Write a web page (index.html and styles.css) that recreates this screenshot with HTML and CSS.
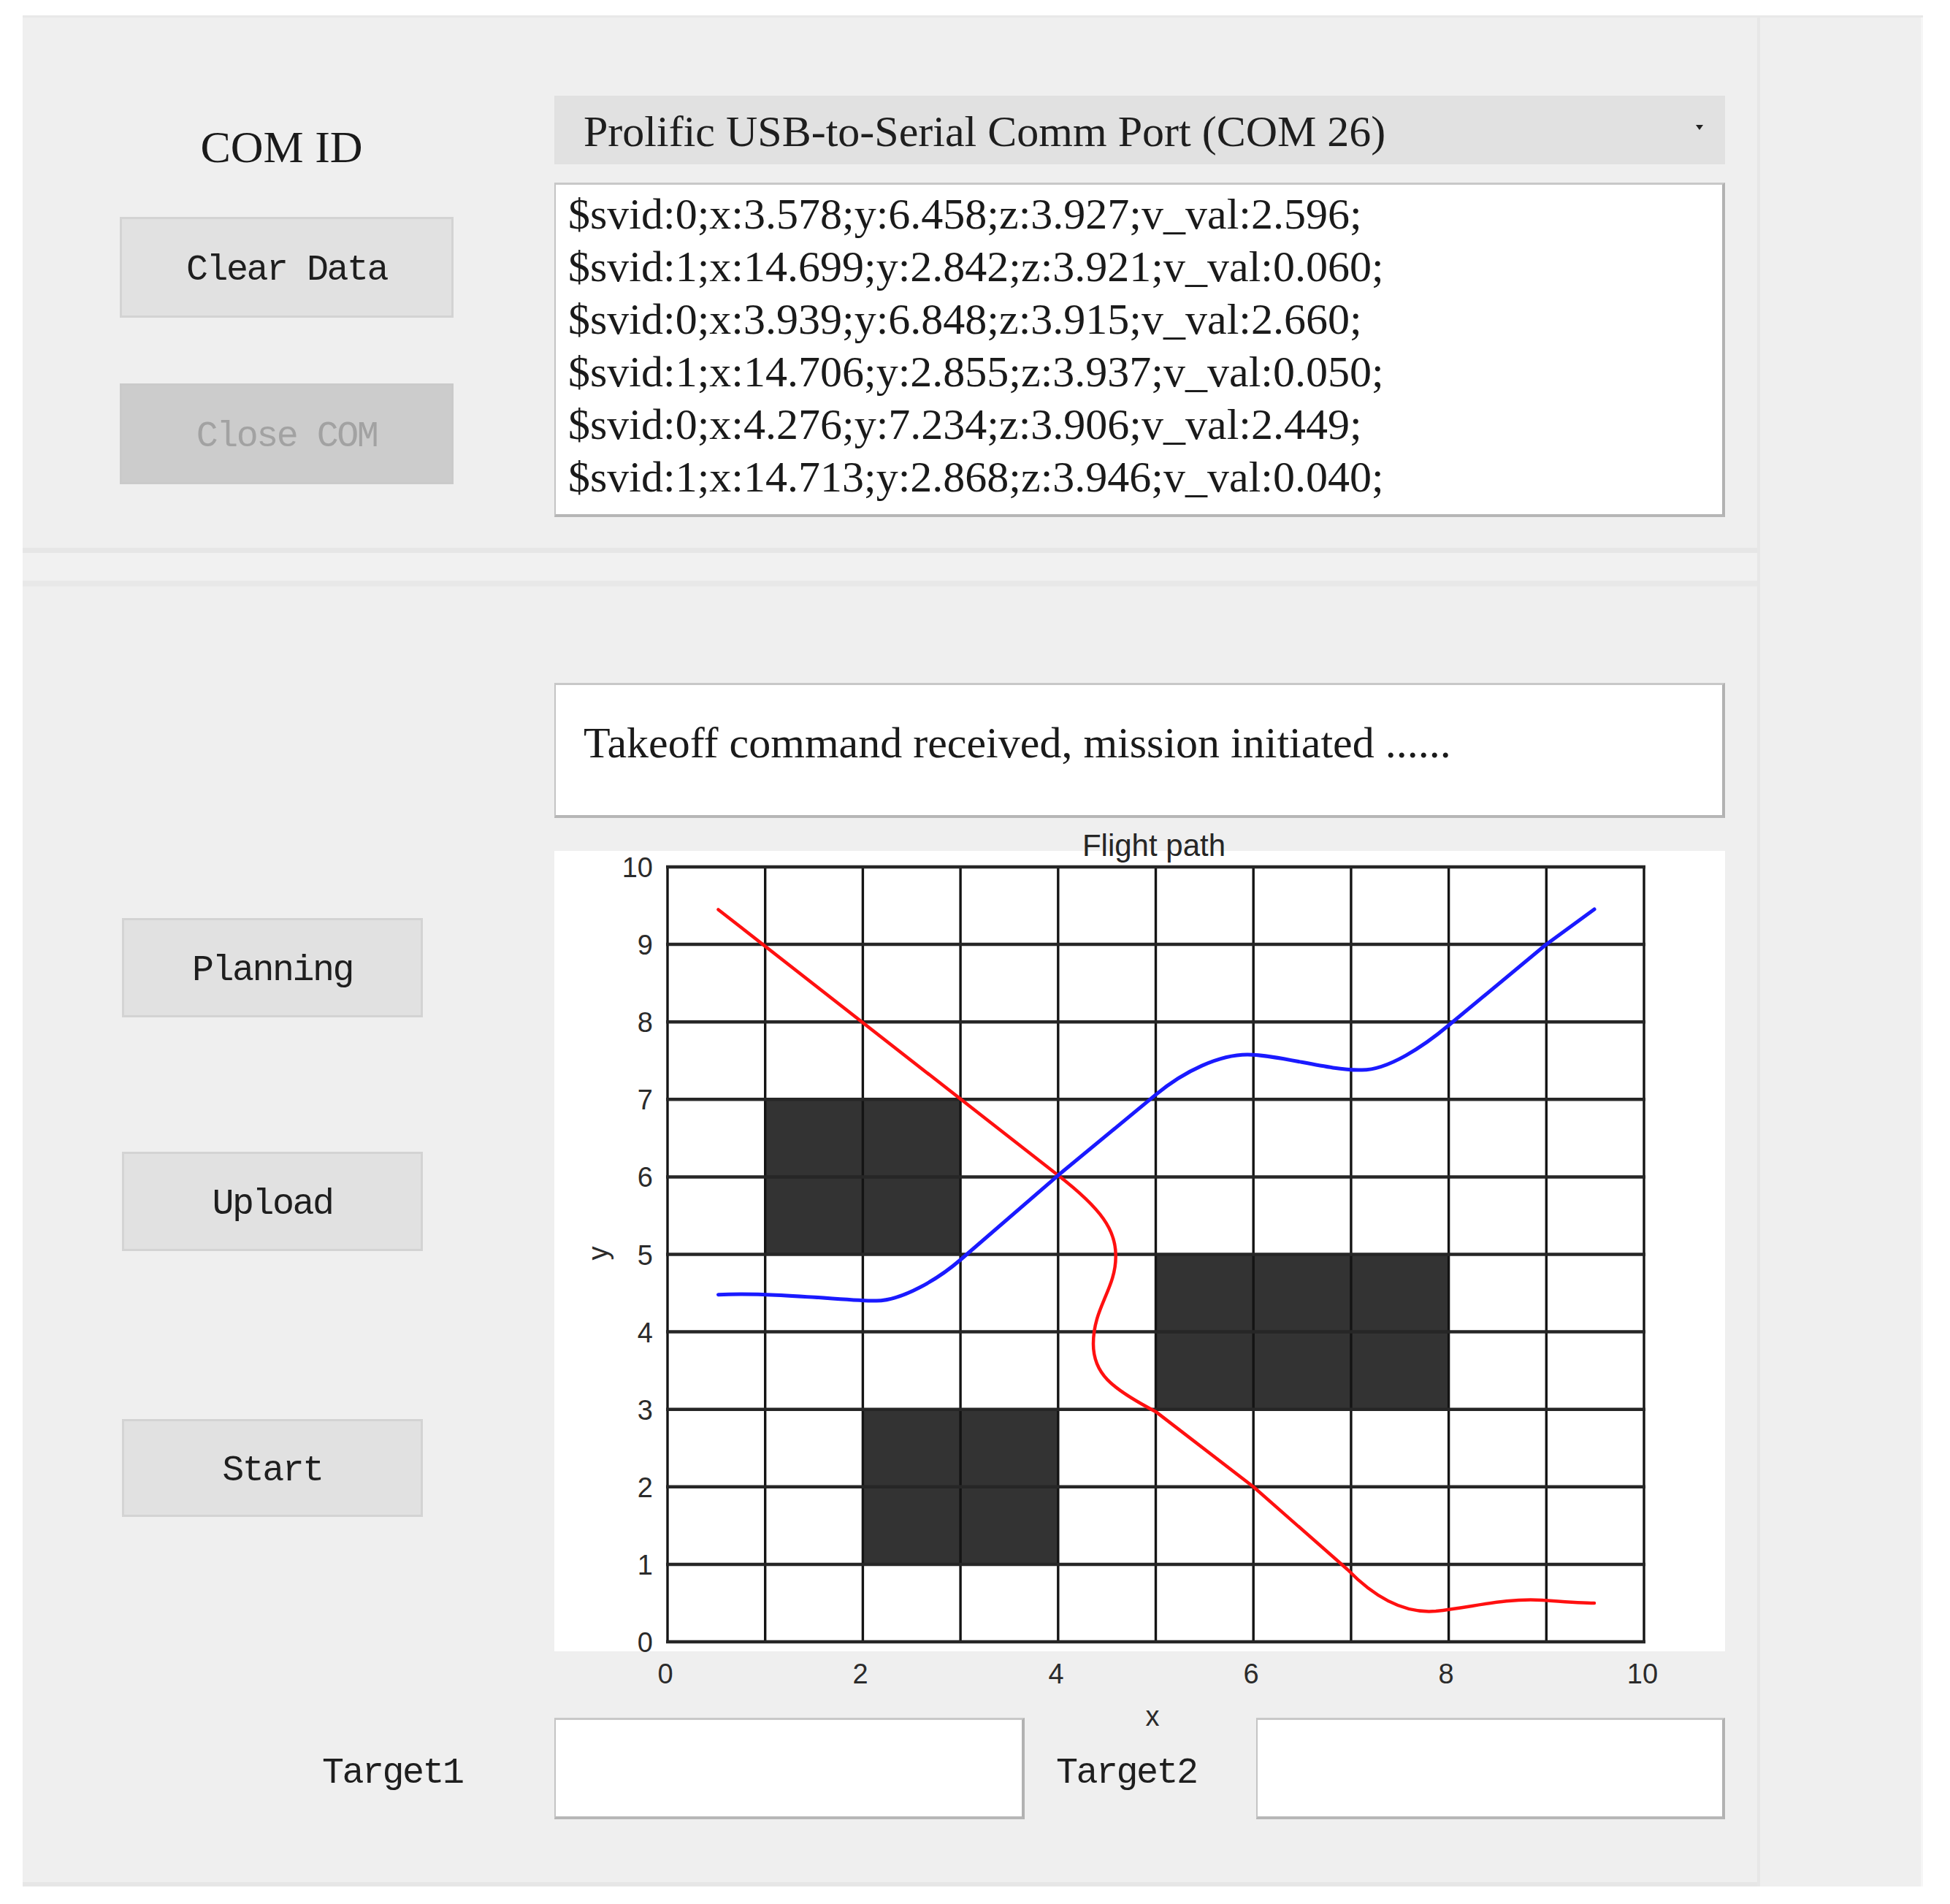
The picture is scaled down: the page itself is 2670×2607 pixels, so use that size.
FILE: index.html
```html
<!DOCTYPE html>
<html lang="en">
<head>
<meta charset="utf-8">
<title>COM Flight Planner</title>
<link rel="stylesheet" href="styles.css">
</head>
<body>
<div class="frame">
  <div class="main">
    <section class="top-panel">
      <div class="left-col">
        <div class="com-label">COM ID</div>
        <div class="btn btn-clear">Clear Data</div>
        <div class="btn btn-disabled btn-close">Close COM</div>
      </div>
      <div class="right-col">
        <div class="dropdown">
          <span class="dropdown-text">Prolific USB-to-Serial Comm Port (COM 26)</span>
          <span class="dropdown-arrow"></span>
        </div>
        <div class="log">
          <div>$svid:0;x:3.578;y:6.458;z:3.927;v_val:2.596;</div>
          <div>$svid:1;x:14.699;y:2.842;z:3.921;v_val:0.060;</div>
          <div>$svid:0;x:3.939;y:6.848;z:3.915;v_val:2.660;</div>
          <div>$svid:1;x:14.706;y:2.855;z:3.937;v_val:0.050;</div>
          <div>$svid:0;x:4.276;y:7.234;z:3.906;v_val:2.449;</div>
          <div>$svid:1;x:14.713;y:2.868;z:3.946;v_val:0.040;</div>
        </div>
      </div>
    </section>
    <div class="panel-gap"></div>
    <section class="bottom-panel">
      <div class="bottom-row">
        <div class="btn-col">
          <div class="btn btn-plan">Planning</div>
          <div class="btn btn-upload">Upload</div>
          <div class="btn btn-start">Start</div>
        </div>
        <div class="plot-col">
          <div class="message">Takeoff command received, mission initiated ......</div>
          <svg class="plot" width="1603" height="1190" viewBox="759 1140 1603 1190" xmlns="http://www.w3.org/2000/svg">
            <rect x="759" y="1165" width="1603" height="1096" fill="#ffffff"/>
            <!-- obstacles -->
            <rect x="1047.7" y="1505.3" width="267.4" height="212.2" fill="#333333"/>
            <rect x="1582.5" y="1717.5" width="401.1" height="212.2" fill="#333333"/>
            <rect x="1181.4" y="1929.7" width="267.4" height="212.2" fill="#333333"/>
            <!-- vertical grid -->
            <g stroke="#141414" stroke-width="3.4">
              <line x1="914" y1="1187" x2="914" y2="2248"/>
              <line x1="1047.7" y1="1187" x2="1047.7" y2="2248"/>
              <line x1="1181.4" y1="1187" x2="1181.4" y2="2248"/>
              <line x1="1315.1" y1="1187" x2="1315.1" y2="2248"/>
              <line x1="1448.8" y1="1187" x2="1448.8" y2="2248"/>
              <line x1="1582.5" y1="1187" x2="1582.5" y2="2248"/>
              <line x1="1716.2" y1="1187" x2="1716.2" y2="2248"/>
              <line x1="1849.9" y1="1187" x2="1849.9" y2="2248"/>
              <line x1="1983.6" y1="1187" x2="1983.6" y2="2248"/>
              <line x1="2117.3" y1="1187" x2="2117.3" y2="2248"/>
              <line x1="2251" y1="1187" x2="2251" y2="2248"/>
            </g>
            <!-- horizontal grid -->
            <g stroke="#262626" stroke-width="4.5">
              <line x1="912" y1="1187" x2="2253" y2="1187"/>
              <line x1="912" y1="1293.1" x2="2253" y2="1293.1"/>
              <line x1="912" y1="1399.2" x2="2253" y2="1399.2"/>
              <line x1="912" y1="1505.3" x2="2253" y2="1505.3"/>
              <line x1="912" y1="1611.4" x2="2253" y2="1611.4"/>
              <line x1="912" y1="1717.5" x2="2253" y2="1717.5"/>
              <line x1="912" y1="1823.6" x2="2253" y2="1823.6"/>
              <line x1="912" y1="1929.7" x2="2253" y2="1929.7"/>
              <line x1="912" y1="2035.8" x2="2253" y2="2035.8"/>
              <line x1="912" y1="2141.9" x2="2253" y2="2141.9"/>
              <line x1="912" y1="2248" x2="2253" y2="2248"/>
            </g>
            <!-- paths -->
            <path d="M983.5 1245.4 L1448.8 1609.3 C1509 1656 1528 1685 1527.7 1719.6 C1528 1765 1497 1790 1497 1840 C1497 1880 1520 1900 1582.5 1932.9 L1716.2 2035.8 L1845 2149 C1880 2185 1920 2210 1966 2206 C2020 2200 2060 2188 2112 2191 C2140 2193 2165 2195 2183 2195" fill="none" stroke="#ff1010" stroke-width="4.5" stroke-linejoin="round" stroke-linecap="round"/>
            <path d="M983.5 1772.7 C1060 1769 1170 1782 1200 1781 C1235 1781 1285 1751 1315 1725 L1448.8 1609.3 L1582.5 1498.9 C1622 1466 1670 1444 1708 1444 C1750 1444 1820 1466 1863 1465 C1900 1466 1950 1432 1984 1403.5 L2116 1294 L2183 1245" fill="none" stroke="#1a1aff" stroke-width="5" stroke-linejoin="round" stroke-linecap="round"/>
            <!-- labels -->
            <text class="plot-title" x="1580" y="1172" text-anchor="middle">Flight path</text>
            <g class="tick" text-anchor="end">
              <text x="894" y="1201">10</text>
              <text x="894" y="1307">9</text>
              <text x="894" y="1413">8</text>
              <text x="894" y="1519">7</text>
              <text x="894" y="1625">6</text>
              <text x="894" y="1732">5</text>
              <text x="894" y="1838">4</text>
              <text x="894" y="1944">3</text>
              <text x="894" y="2050">2</text>
              <text x="894" y="2156">1</text>
              <text x="894" y="2262">0</text>
            </g>
            <g class="tick" text-anchor="middle">
              <text x="911" y="2305">0</text>
              <text x="1178" y="2305">2</text>
              <text x="1446" y="2305">4</text>
              <text x="1713" y="2305">6</text>
              <text x="1980" y="2305">8</text>
              <text x="2249" y="2305">10</text>
            </g>
            <text class="tick" x="1578" y="2363" text-anchor="middle">x</text>
            <text class="tick" x="0" y="0" text-anchor="middle" transform="translate(832 1716) rotate(-90)">y</text>
          </svg>
        </div>
      </div>
      <div class="target-row">
        <div class="target-label target-label-1">Target1</div>
        <div class="field field-1"></div>
        <div class="target-label target-label-2">Target2</div>
        <div class="field field-2"></div>
      </div>
    </section>
  </div>
  <div class="side"></div>
</div>
</body>
</html>
```

FILE: styles.css
```css
* { box-sizing: border-box; }

html, body {
  margin: 0;
  padding: 0;
  background: #ffffff;
}

body {
  font-family: "Liberation Serif", "Times New Roman", serif;
  color: #1c1c1c;
}

.frame {
  margin: 21px 0 0 31px;
  width: 2602px;
  height: 2562px;
  background: #efefef;
  display: flex;
  border-top: 3px solid #e8e8e8;
}

.main {
  width: 2379px;
  display: flex;
  flex-direction: column;
  border-right: 4px solid #e7e7e7;
}

.side {
  flex: 1;
  border-right: 3px solid #f6f6f6;
}

/* ---------- top panel ---------- */
.top-panel {
  height: 733px;
  padding: 107px 0 0 133px;
  display: flex;
  align-items: flex-start;
  border-bottom: 7px solid #e6e6e6;
}

.left-col {
  width: 457px;
  display: flex;
  flex-direction: column;
  align-items: center;
}

.com-label {
  margin-top: 34px;
  height: 72px;
  line-height: 72px;
  font-size: 62px;
  padding-right: 14px;
  color: #1a1a1a;
}

.btn {
  font-family: "Liberation Mono", "Courier New", monospace;
  font-size: 50px;
  letter-spacing: -2.5px;
  color: #1e1e1e;
  background: #e1e1e1;
  border: 3px solid #d3d3d3;
  padding-top: 6px;
  display: flex;
  align-items: center;
  justify-content: center;
}

.btn-clear {
  margin-top: 60px;
  width: 457px;
  height: 138px;
}

.btn-close {
  margin-top: 90px;
  width: 457px;
  height: 138px;
}

.btn-disabled {
  background: #cccccc;
  border-color: #cacaca;
  color: #a2a2a2;
}

.right-col {
  margin-left: 138px;
  width: 1603px;
}

.dropdown {
  height: 94px;
  background: #e1e1e1;
  padding: 0 40px;
  display: flex;
  align-items: center;
  justify-content: space-between;
  font-size: 60px;
  color: #1e1e1e;
}

.dropdown-text {
  line-height: 94px;
  padding-top: 4px;
}

.dropdown-arrow {
  width: 0;
  height: 0;
  margin-right: -10px;
  margin-top: -8px;
  border-left: 5px solid transparent;
  border-right: 5px solid transparent;
  border-top: 7px solid #222;
}

.log {
  margin-top: 25px;
  height: 458px;
  background: #ffffff;
  border-top: 3px solid #c8c8c8;
  border-left: 2px solid #c4c4c4;
  border-right: 4px solid #b2b2b2;
  border-bottom: 4px solid #b6b6b6;
  padding: 4px 0 0 17px;
  font-size: 60px;
  line-height: 72px;
  color: #1a1a1a;
  white-space: nowrap;
}

/* ---------- gap ---------- */
.panel-gap {
  height: 38px;
  background: #f1f1f1;
}

/* ---------- bottom panel ---------- */
.bottom-panel {
  flex: 1;
  border-top: 8px solid #e8e8e8;
  border-bottom: 6px solid #e6e6e6;
  display: flex;
  flex-direction: column;
}

.bottom-row {
  display: flex;
  align-items: flex-start;
  padding-left: 136px;
}

.btn-col {
  width: 412px;
  display: flex;
  flex-direction: column;
}

.btn-plan {
  margin-top: 454px;
  height: 136px;
}

.btn-upload {
  margin-top: 184px;
  height: 136px;
}

.btn-start {
  margin-top: 230px;
  height: 134px;
}

.plot-col {
  margin-left: 180px;
  width: 1603px;
}

.message {
  margin-top: 132px;
  height: 185px;
  background: #ffffff;
  border-top: 3px solid #c8c8c8;
  border-left: 2px solid #c4c4c4;
  border-right: 4px solid #b2b2b2;
  border-bottom: 4px solid #b6b6b6;
  padding: 43px 0 0 38px;
  font-size: 60px;
  line-height: 72px;
  color: #1a1a1a;
  white-space: nowrap;
}

.plot {
  display: block;
  margin-top: 20px;
  overflow: visible;
}

.plot-title {
  font-family: "Liberation Sans", Arial, sans-serif;
  font-size: 42px;
  fill: #262626;
}

.tick {
  font-family: "Liberation Sans", Arial, sans-serif;
  font-size: 38px;
  fill: #2b2b2b;
}

.target-row {
  margin-top: 22px;
  display: flex;
  align-items: center;
}

.target-label {
  font-family: "Liberation Mono", "Courier New", monospace;
  font-size: 50px;
  letter-spacing: -2.5px;
  color: #1e1e1e;
  padding-top: 12px;
}

.target-label-1 {
  width: 728px;
  padding-left: 410px;
}

.target-label-2 {
  width: 317px;
  padding-left: 43px;
}

.field {
  height: 139px;
  background: #ffffff;
  border-top: 3px solid #c8c8c8;
  border-left: 2px solid #c4c4c4;
  border-right: 4px solid #b2b2b2;
  border-bottom: 4px solid #b6b6b6;
}

.field-1 { width: 644px; }
.field-2 { width: 642px; }
```
